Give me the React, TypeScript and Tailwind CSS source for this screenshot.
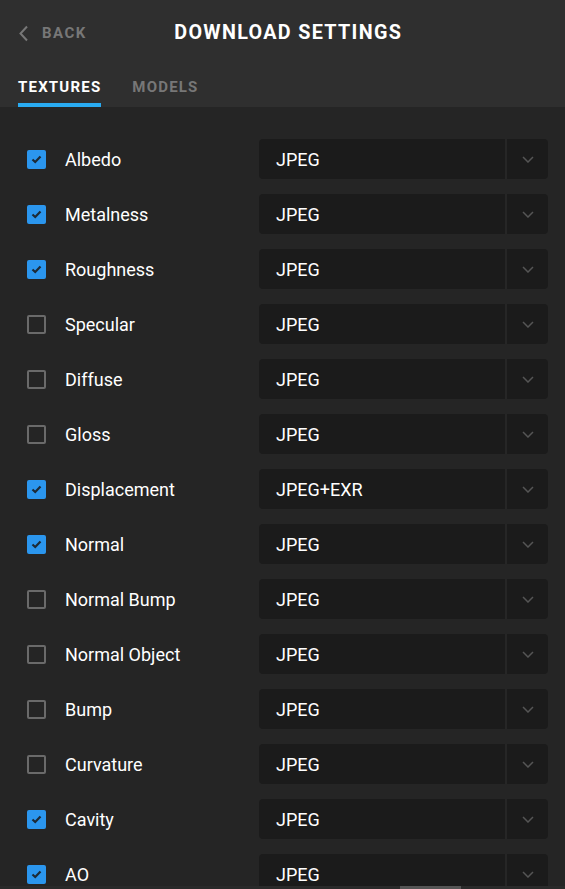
import React from "react";

const rows: [string, boolean, string][] = [
  ["Albedo", true, "JPEG"],
  ["Metalness", true, "JPEG"],
  ["Roughness", true, "JPEG"],
  ["Specular", false, "JPEG"],
  ["Diffuse", false, "JPEG"],
  ["Gloss", false, "JPEG"],
  ["Displacement", true, "JPEG+EXR"],
  ["Normal", true, "JPEG"],
  ["Normal Bump", false, "JPEG"],
  ["Normal Object", false, "JPEG"],
  ["Bump", false, "JPEG"],
  ["Curvature", false, "JPEG"],
  ["Cavity", true, "JPEG"],
  ["AO", true, "JPEG"],
];

export default function App() {
  return (
    <div className="w-[565px] h-[889px] overflow-hidden bg-[#252525] flex flex-col relative" style={{ fontFamily: "Roboto, 'Noto Sans', sans-serif" }}>
      <div className="bg-[#2f2f2f] h-[107px] shrink-0 flex flex-col">
        <div className="relative h-[66px] flex items-center">
          <div className="flex items-center pl-[18px] gap-[13px] text-[#777]">
            <svg width="11" height="17" viewBox="0 0 11 17" fill="none">
              <path d="M9 1.5L2.5 8.5L9 15.5" stroke="#777" strokeWidth="2" />
            </svg>
            <span className="text-[15px] font-bold tracking-[1.5px]">BACK</span>
          </div>
          <div className="absolute left-0 right-0 top-0 h-[66px] flex items-center justify-center pointer-events-none">
            <span className="text-white text-[21px] font-bold tracking-[1.4px] ml-[12px] scale-x-[0.94]">DOWNLOAD SETTINGS</span>
          </div>
        </div>
        <div className="flex items-end pl-[18px] gap-[31px] h-[41px]">
          <div className="flex flex-col">
            <span className="text-white text-[15px] font-bold tracking-[1.2px] leading-none pb-[8px]">TEXTURES</span>
            <div className="h-[4px] bg-[#29abf2]" />
          </div>
          <span className="text-[#777] text-[15px] font-bold tracking-[1.2px] leading-none pb-[12px]">MODELS</span>
        </div>
      </div>
      <div className="flex flex-col pt-[32px] gap-[15px]">
        {rows.map(([name, checked, fmt]) => (
          <div key={name} className="flex items-center h-[40px]">
            <div className="w-[65px] pl-[27px] flex items-center">
              {checked ? (
                <div className="w-[19px] h-[19px] rounded-[2px] bg-[#2b96ee] flex items-center justify-center">
                  <svg width="11" height="9" viewBox="0 0 11 9">
                    <path d="M1.5 4.5L4.2 7L9.5 1.5" stroke="#1d2a36" strokeWidth="2.2" fill="none" />
                  </svg>
                </div>
              ) : (
                <div className="w-[19px] h-[19px] rounded-[2px] border-2 border-[#6a6a6a]" />
              )}
            </div>
            <span className="w-[194px] text-white text-[18px] leading-[20px] pt-[2px]">{name}</span>
            <div className="w-[289px] h-[40px] bg-[#1b1b1b] rounded-[4px] flex items-center">
              <span className="flex-1 pl-[17px] text-white text-[18px] leading-[20px] pt-[2px]">{fmt}</span>
              <div className="w-[2px] h-[40px] bg-[#262626]" />
              <div className="w-[41px] flex items-center justify-center">
                <svg width="12" height="7" viewBox="0 0 12 7">
                  <path d="M1 1L6 6L11 1" stroke="#555" strokeWidth="1.5" fill="none" />
                </svg>
              </div>
            </div>
          </div>
        ))}
      </div>
      <div className="absolute left-0 right-0 bottom-0 h-[3px] bg-[#2a2a2a]">
        <div className="absolute left-[400px] w-[61px] top-0 bottom-0 bg-[#555]" />
      </div>
    </div>
  );
}
